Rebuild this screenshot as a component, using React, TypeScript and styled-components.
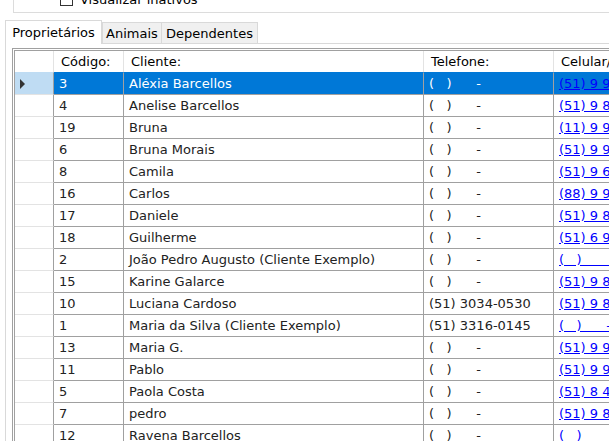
import styled, { createGlobalStyle } from "styled-components";

const GlobalStyle = createGlobalStyle`
  body {
    margin: 0;
    background: #fff;
    font-family: "DejaVu Sans", Verdana, sans-serif;
    font-size: 13px;
    overflow: hidden;
  }
`;

type Owner = { code: string; name: string; phone: string; cell: string };

const EMPTY = "(   )      -";

const owners: Owner[] = [
  { code: "3", name: "Aléxia Barcellos", phone: EMPTY, cell: "(51) 9 9912-4471" },
  { code: "4", name: "Anelise Barcellos", phone: EMPTY, cell: "(51) 9 8847-2210" },
  { code: "19", name: "Bruna", phone: EMPTY, cell: "(11) 9 9632-1187" },
  { code: "6", name: "Bruna Morais", phone: EMPTY, cell: "(51) 9 9154-3320" },
  { code: "8", name: "Camila", phone: EMPTY, cell: "(51) 9 6620-4519" },
  { code: "16", name: "Carlos", phone: EMPTY, cell: "(88) 9 9741-0082" },
  { code: "17", name: "Daniele", phone: EMPTY, cell: "(51) 9 8410-7735" },
  { code: "18", name: "Guilherme", phone: EMPTY, cell: "(51) 6 9923-5108" },
  { code: "2", name: "João Pedro Augusto (Cliente Exemplo)", phone: EMPTY, cell: "(   )        " },
  { code: "15", name: "Karine Galarce", phone: EMPTY, cell: "(51) 9 8534-6671" },
  { code: "10", name: "Luciana Cardoso", phone: "(51) 3034-0530", cell: "(51) 9 8199-2043" },
  { code: "1", name: "Maria da Silva (Cliente Exemplo)", phone: "(51) 3316-0145", cell: EMPTY },
  { code: "13", name: "Maria G.", phone: EMPTY, cell: "(51) 9 9287-3356" },
  { code: "11", name: "Pablo", phone: EMPTY, cell: "(51) 9 9043-8812" },
  { code: "5", name: "Paola Costa", phone: EMPTY, cell: "(51) 8 4412-9960" },
  { code: "7", name: "pedro", phone: EMPTY, cell: "(51) 9 8876-1124" },
  { code: "12", name: "Ravena Barcellos", phone: EMPTY, cell: "(   )" },
];

export default function App() {
  const selected = "3";
  return (
    <Page>
      <GlobalStyle />
      <GroupBox>
        <CheckRow>
          <CheckBox />
          <span>Visualizar inativos</span>
        </CheckRow>
      </GroupBox>

      <TabStrip>
        <Tab $active $w={97}>Proprietários</Tab>
        <Tab $w={60}>Animais</Tab>
        <Tab $w={97} $overlap>Dependentes</Tab>
      </TabStrip>

      <Pane>
        <Grid>
          <HeaderRow>
            <HeaderCell />
            <HeaderCell>Código:</HeaderCell>
            <HeaderCell>Cliente:</HeaderCell>
            <HeaderCell>Telefone:</HeaderCell>
            <HeaderCell>Celular/WhatsApp:</HeaderCell>
          </HeaderRow>
          {owners.map((o) => {
            const sel = o.code === selected;
            return (
              <DataRow key={o.code}>
                <RowHeader $selected={sel}>{sel && <Arrow />}</RowHeader>
                <Cell $selected={sel}>{o.code}</Cell>
                <Cell $selected={sel}>{o.name}</Cell>
                <Cell $selected={sel}>{o.phone}</Cell>
                <Cell $selected={sel}>
                  <Link>{o.cell}</Link>
                </Cell>
              </DataRow>
            );
          })}
        </Grid>
      </Pane>
    </Page>
  );
}

const Page = styled.div`
  width: 820px;
  height: 441px;
  overflow: hidden;
`;

const GroupBox = styled.div`
  margin-left: 13px;
  width: 760px;
  height: 12px;
  border: 1px solid #dcdcdc;
  border-top: none;
  overflow: hidden;
`;

const CheckRow = styled.div`
  display: flex;
  align-items: center;
  gap: 7px;
  height: 13px;
  margin-top: -7px;
  padding-left: 46px;
  color: #000;
  white-space: nowrap;
`;

const CheckBox = styled.div`
  width: 13px;
  height: 13px;
  box-sizing: border-box;
  border: 1px solid #333;
  background: #fff;
`;

const TabStrip = styled.div`
  display: flex;
  align-items: flex-end;
  height: 23px;
  margin-top: 7px;
  padding-left: 5px;
`;

const Tab = styled.div<{ $active?: boolean; $w: number; $overlap?: boolean }>`
  box-sizing: border-box;
  width: ${(p) => p.$w}px;
  height: ${(p) => (p.$active ? 24 : 21)}px;
  margin-bottom: ${(p) => (p.$active ? -1 : 0)}px;
  margin-left: ${(p) => (p.$overlap ? -1 : 0)}px;
  position: relative;
  z-index: ${(p) => (p.$active ? 1 : 0)};
  display: flex;
  align-items: center;
  justify-content: center;
  border: 1px solid #d9d9d9;
  border-bottom: none;
  background: ${(p) => (p.$active ? "#fff" : "#f0f0f0")};
  color: #000;
  white-space: nowrap;
`;

const Pane = styled.div`
  margin-left: 5px;
  border-top: 1px solid #d9d9d9;
  border-left: 1px solid #d9d9d9;
  padding: 4px 0 0 6px;
  height: 420px;
`;

const Grid = styled.div`
  width: 780px;
  border: 3px double #a0a0a0;
  border-right: none;
  border-bottom: none;
`;

const columns = "39px 70px 300px 130px 1fr";

const HeaderRow = styled.div`
  display: grid;
  grid-template-columns: ${columns};
  height: 21px;
`;

const HeaderCell = styled.div`
  box-sizing: border-box;
  border-right: 1px solid #e3e3e3;
  padding-left: 7px;
  line-height: 21px;
  color: #000;
  white-space: nowrap;
  overflow: hidden;
`;

const DataRow = styled.div`
  display: grid;
  grid-template-columns: ${columns};
  height: 22px;
`;

const RowHeader = styled.div<{ $selected: boolean }>`
  box-sizing: border-box;
  display: flex;
  align-items: center;
  padding-left: 5px;
  border-top: 1px solid ${(p) => (p.$selected ? "#bfdcf3" : "#e3e3e3")};
  border-right: 1px solid #a0a0a0;
  background: ${(p) => (p.$selected ? "#bfdcf3" : "#fff")};
`;

const Arrow = styled.div`
  width: 0;
  height: 0;
  border-left: 5px solid #333;
  border-top: 5px solid transparent;
  border-bottom: 5px solid transparent;
`;

const Cell = styled.div<{ $selected: boolean }>`
  box-sizing: border-box;
  border-top: 1px solid ${(p) => (p.$selected ? "#0078d7" : "#a0a0a0")};
  border-right: 1px solid #a0a0a0;
  background: ${(p) => (p.$selected ? "#0078d7" : "#fff")};
  color: ${(p) => (p.$selected ? "#fff" : "#222")};
  padding-left: 5px;
  line-height: 21px;
  white-space: pre;
  overflow: hidden;
`;

const Link = styled.span`
  color: #0000ff;
  text-decoration: underline;
`;
